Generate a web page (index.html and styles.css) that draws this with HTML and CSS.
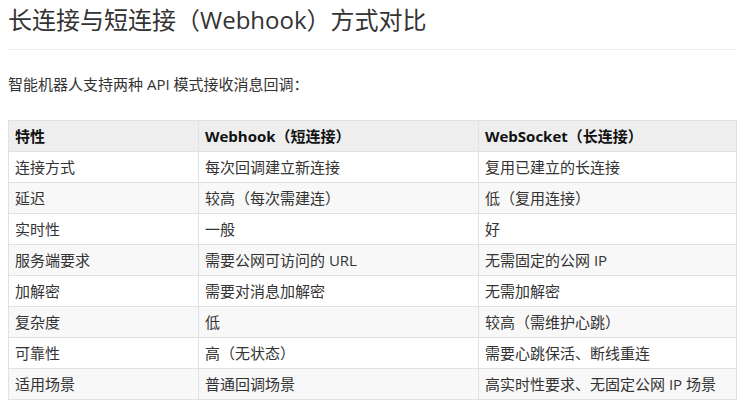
FILE: index.html
```html
<!DOCTYPE html>
<html lang="zh-CN">
<head>
<meta charset="utf-8">
<title>长连接与短连接</title>
<link rel="stylesheet" href="styles.css">
</head>
<body>
<div class="doc">
  <h2 class="title">长连接与短连接（Webhook）方式对比</h2>
  <p class="intro">智能机器人支持两种 API 模式接收消息回调：</p>
  <table class="cmp">
    <thead>
      <tr><th class="c1">特性</th><th class="c2">Webhook（短连接）</th><th class="c3">WebSocket（长连接）</th></tr>
    </thead>
    <tbody>
      <tr><td>连接方式</td><td>每次回调建立新连接</td><td>复用已建立的长连接</td></tr>
      <tr><td>延迟</td><td>较高（每次需建连）</td><td>低（复用连接）</td></tr>
      <tr><td>实时性</td><td>一般</td><td>好</td></tr>
      <tr><td>服务端要求</td><td>需要公网可访问的 URL</td><td>无需固定的公网 IP</td></tr>
      <tr><td>加解密</td><td>需要对消息加解密</td><td>无需加解密</td></tr>
      <tr><td>复杂度</td><td>低</td><td>较高（需维护心跳）</td></tr>
      <tr><td>可靠性</td><td>高（无状态）</td><td>需要心跳保活、断线重连</td></tr>
      <tr><td>适用场景</td><td>普通回调场景</td><td>高实时性要求、无固定公网 IP 场景</td></tr>
    </tbody>
  </table>
</div>
</body>
</html>
```
FILE: styles.css
```css
html, body { margin: 0; padding: 0; background: #fff; }
body {
  font-family: "Open Sans", "Noto Sans CJK SC", sans-serif;
  color: #333;
  overflow: hidden;
}
.doc { padding: 0 0 0 8px; }
.title {
  margin: 0;
  padding: 4px 0 13px;
  font-size: 24px;
  font-weight: 400;
  line-height: 32px;
  color: #333;
  border-bottom: 1px solid #eee;
}
.intro {
  margin: 23px 0 25px;
  font-size: 15px;
  line-height: 22px;
}
.cmp {
  border-collapse: collapse;
  width: 729px;
  font-size: 15px;
  table-layout: fixed;
}
.cmp th, .cmp td {
  border: 1px solid #dfe2e5;
  padding: 0 6px;
  height: 30px;
  text-align: left;
  line-height: 22px;
  white-space: nowrap;
}
.cmp th { background: #eee; font-weight: 700; color: #111; }
.cmp .c1 { width: 177px; }
.cmp .c2 { width: 267px; }
.cmp tbody tr:nth-child(even) td { background: #f8f8f8; }
```
